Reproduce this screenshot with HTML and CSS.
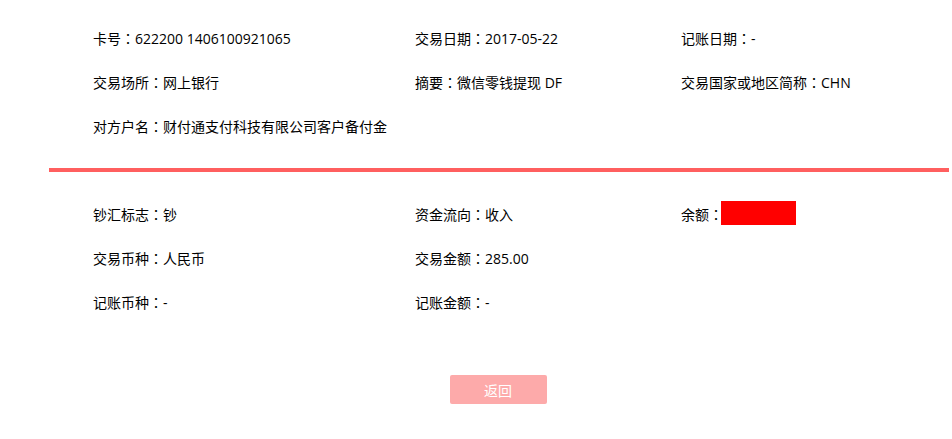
FILE: index.html
```html
<!DOCTYPE html>
<html lang="zh-CN">
<head>
<meta charset="utf-8">
<title>交易详情</title>
<link rel="stylesheet" href="styles.css">
</head>
<body>
<div class="wrap">
  <div class="info info-top">
    <div class="item">卡号<span class="sep" lang="zh-TW">：</span>622200 1406100921065</div>
    <div class="item">交易日期<span class="sep" lang="zh-TW">：</span>2017-05-22</div>
    <div class="item">记账日期<span class="sep" lang="zh-TW">：</span>-</div>
    <div class="item">交易场所<span class="sep" lang="zh-TW">：</span>网上银行</div>
    <div class="item">摘要<span class="sep" lang="zh-TW">：</span>微信零钱提现 DF</div>
    <div class="item">交易国家或地区简称<span class="sep" lang="zh-TW">：</span>CHN</div>
    <div class="item">对方户名<span class="sep" lang="zh-TW">：</span>财付通支付科技有限公司客户备付金</div>
  </div>
  <div class="divider"></div>
  <div class="info info-bottom">
    <div class="item">钞汇标志<span class="sep" lang="zh-TW">：</span>钞</div>
    <div class="item">资金流向<span class="sep" lang="zh-TW">：</span>收入</div>
    <div class="item">余额<span class="sep" lang="zh-TW">：</span><span class="masked"></span></div>
    <div class="item">交易币种<span class="sep" lang="zh-TW">：</span>人民币</div>
    <div class="item">交易金额<span class="sep" lang="zh-TW">：</span>285.00</div>
    <div class="item"></div>
    <div class="item">记账币种<span class="sep" lang="zh-TW">：</span>-</div>
    <div class="item">记账金额<span class="sep" lang="zh-TW">：</span>-</div>
  </div>
  <div class="actions">
    <button class="btn-back" type="button">返回</button>
  </div>
</div>
</body>
</html>
```

FILE: styles.css
```css
html, body {
  margin: 0;
  padding: 0;
  background: #fff;
}
body {
  font-family: "Open Sans", "Noto Sans CJK SC", sans-serif;
  font-size: 14px;
  color: #000;
}
.wrap {
  margin-left: 49px;
  width: 900px;
}
.info {
  display: grid;
  grid-template-columns: 322px 266px 1fr;
  grid-auto-rows: 44px;
  padding-left: 44px;
}
.info-top {
  padding-top: 16px;
}
.info-bottom {
  padding-top: 20px;
}
.item {
  line-height: 44px;
  white-space: nowrap;
}
.sep {
  font-family: "Noto Sans CJK TC", "Noto Sans CJK SC", sans-serif;
}
.divider {
  margin-top: 20px;
  height: 4px;
  background: #ff5f5f;
}
.masked {
  display: inline-block;
  width: 75px;
  height: 24px;
  margin-left: -2px;
  background: #ff0000;
  vertical-align: middle;
  position: relative;
  top: -3px;
}
.actions {
  margin-top: 51px;
  padding-right: 2px;
  display: flex;
  justify-content: center;
}
.btn-back {
  width: 97px;
  height: 29px;
  border: none;
  border-radius: 2px;
  background: #fdaaaa;
  color: #fff;
  font-family: "Noto Sans CJK SC", "Open Sans", sans-serif;
  font-size: 14px;
  padding: 0;
  cursor: pointer;
}
```
